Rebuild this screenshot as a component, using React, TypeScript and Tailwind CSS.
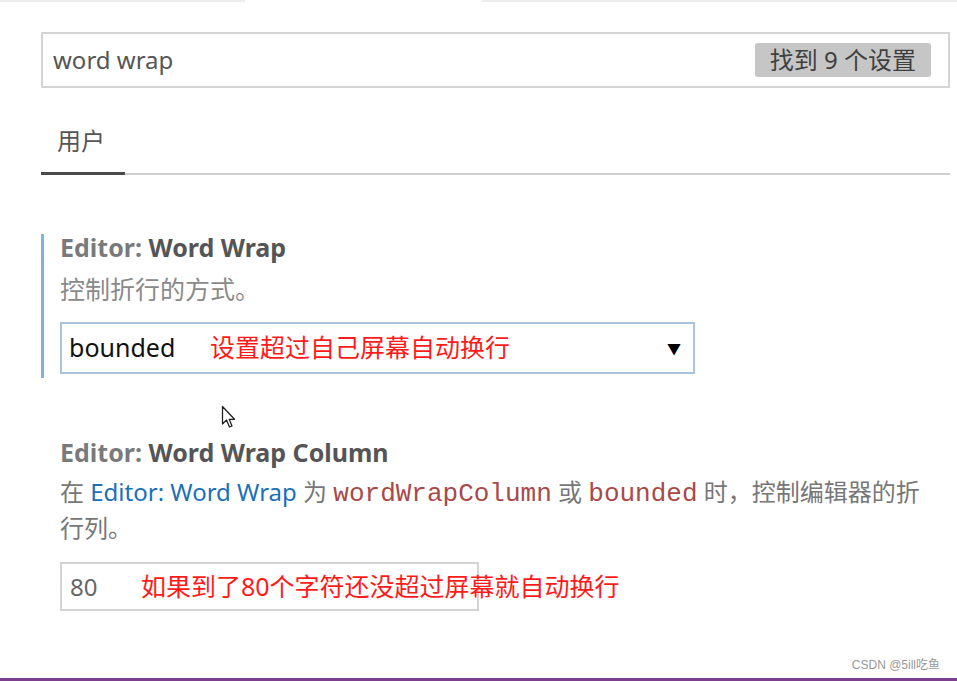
export default function App() {
  const ui = { fontFamily: '"Noto Sans", "Noto Sans CJK SC", sans-serif' }
  const mono = { fontFamily: '"Liberation Mono", "Noto Sans CJK SC", monospace' }

  return (
    <div className="relative h-[681px] w-[957px] overflow-hidden bg-white" style={ui}>
      {/* faint strips along the top edge */}
      <div className="flex h-[2px]">
        <div className="w-[245px] bg-[#ececec]" />
        <div className="w-[237px]" />
        <div className="flex-1 bg-[#ececec]" />
      </div>

      <div className="pl-[41px] pr-[7px] pt-[30px]">
        {/* search box */}
        <div className="flex h-[56px] items-center justify-between border-2 border-[#d4d4d4] pl-[10px] pr-[17px]">
          <span className="text-[24px] text-[#555]">word wrap</span>
          <span className="rounded-[3px] bg-[#c6c6c6] px-[15px] text-[24px] leading-[34px] text-[#3f3f3f]">找到 9 个设置</span>
        </div>

        {/* tab */}
        <div className="mt-[36px] flex">
          <div className="w-[84px] border-b-[3px] border-[#4a4a4a] pb-[14px] pl-[16px] text-[24px] leading-[34px] text-[#555]">用户</div>
          <div className="flex-1 border-b-2 border-[#cfcfcf]" />
        </div>

        {/* Editor: Word Wrap */}
        <div className="mt-[59px] border-l-[3px] border-[#7cb4dc] pb-[4px] pl-[16px]">
          <div className="text-[25px] font-bold leading-[26px]">
            <span className="text-[#7a7a7a]">Editor: </span>
            <span className="text-[#555]">Word Wrap</span>
          </div>
          <div className="mt-[16px] text-[25px] leading-[26px] text-[#8a8a8a]">控制折行的方式。</div>
          <div className="mt-[20px] flex h-[52px] w-[635px] items-center border-2 border-[#aac5d9] pl-[7px] pr-[12px]">
            <span className="w-[141px] shrink-0 text-[25px] text-[#111]">bounded</span>
            <span className="flex-1 text-[25px] text-[#ff1a1a]">设置超过自己屏幕自动换行</span>
            <span className="text-[14px] text-black">▼</span>
          </div>
        </div>

        {/* Editor: Word Wrap Column */}
        <div className="relative mt-[61px] pl-[19px]">
          <svg className="absolute -top-[34px] left-[180px]" width="18" height="26" viewBox="0 0 18 26">
            <path d="M1.5 1.5 L1.5 19 L5.5 15 L8.5 22 L11 21 L8.2 14.3 L13.5 14.3 Z" fill="white" stroke="#222" strokeWidth="1.3" strokeLinejoin="round" />
          </svg>
          <div className="text-[25px] font-bold leading-[26px]">
            <span className="text-[#7a7a7a]">Editor: </span>
            <span className="text-[#555]">Word Wrap Column</span>
          </div>
          <div className="mt-[10px] pr-[12px] text-[24px] leading-[34px] text-[#777]">
            在 <span className="text-[#1b6fb8]">Editor: Word Wrap</span> 为{' '}
            <span className="text-[26px] text-[#a8494a]" style={mono}>wordWrapColumn</span> 或{' '}
            <span className="text-[26px] text-[#a8494a]" style={mono}>bounded</span> 时，控制编辑器的折行列。
          </div>
          <div className="mt-[17px] flex h-[49px] w-[419px] items-center border-2 border-[#d4d4d4] pl-[8px]">
            <span className="w-[71px] shrink-0 text-[24px] text-[#666]">80</span>
            <span className="whitespace-nowrap text-[25px] text-[#ff1a1a]">如果到了80个字符还没超过屏幕就自动换行</span>
          </div>
        </div>
      </div>

      <div className="absolute bottom-[7px] right-[17px] text-[12px] text-[#999]" style={{ fontFamily: '"Liberation Sans", "Noto Sans CJK SC", sans-serif' }}>
        CSDN @5ill吃鱼
      </div>
      <div className="absolute bottom-0 left-0 h-[3px] w-full bg-[#7b3f8e]" />
    </div>
  )
}
